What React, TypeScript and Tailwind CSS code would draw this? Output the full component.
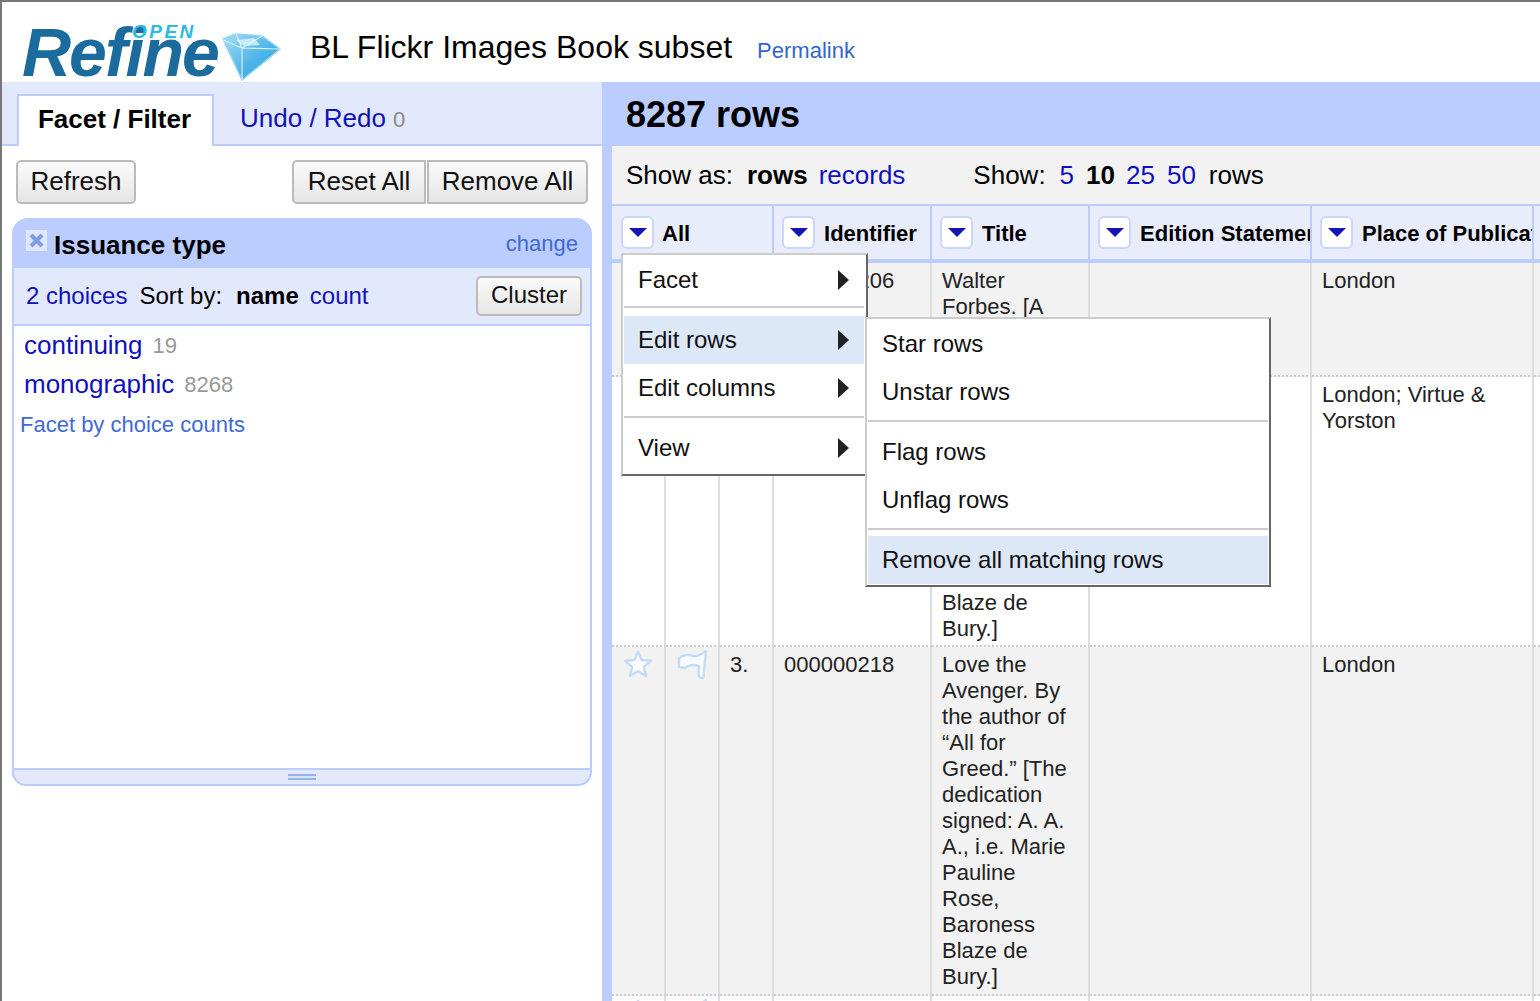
import React from "react";

const LINK = "text-[#1111bb]";
const font = { fontFamily: '"Liberation Sans", Arial, sans-serif' };

function Star() {
  return (
    <svg width="30" height="30" viewBox="0 0 30 30" className="block">
      <path d="M15 2.5 L18.6 11 L27.8 11.8 L20.9 17.9 L23 27 L15 22.2 L7 27 L9.1 17.9 L2.2 11.8 L11.4 11 Z" fill="#f8fbff" stroke="#c4dcf8" strokeWidth="2.4" strokeLinejoin="round" />
    </svg>
  );
}

function FlagIcon() {
  return (
    <svg width="31" height="32" viewBox="0 0 31 32" className="block">
      <path d="M2 9 C6 6 12 5 16 7 C20 8 25 5 29 2 L27.5 17 L26.5 28 C25 30 22 29 21.5 26 L22 17 C17 15 11 16 8 19 L2 18 Z" fill="#f8fbff" stroke="#c4dcf8" strokeWidth="2.4" strokeLinejoin="round" />
    </svg>
  );
}

function Arrow() {
  return <span className="block w-0 h-0 border-y-[10px] border-y-transparent border-l-[11px] border-l-[#222]" />;
}

function ColButton() {
  return (
    <span className="shrink-0 w-[33px] h-[33px] bg-white border-2 border-[#ccd6fb] rounded-[6px] flex items-center justify-center">
      <span className="block w-0 h-0 border-x-[9px] border-x-transparent border-t-[9px] border-t-[#1414b8]" />
    </span>
  );
}

function Btn({ children, className = "" }: { children: React.ReactNode; className?: string }) {
  return (
    <button className={"border-2 border-[#bbb] rounded-[5px] bg-gradient-to-b from-[#fafafa] to-[#e6e6e6] text-[#111] flex items-center justify-center pb-[2px] " + className}>
      {children}
    </button>
  );
}

function MenuItem({ label, arrow, active }: { label: string; arrow?: boolean; active?: boolean }) {
  return (
    <div className={"h-12 pl-[14px] pr-[15px] flex items-center justify-between text-[24px] text-[#111] " + (active ? "bg-[#dce7f7]" : "")}>
      <span>{label}</span>
      {arrow && <Arrow />}
    </div>
  );
}

function Th({ label, colSpan, last, first }: { label: string; colSpan?: number; last?: boolean; first?: boolean }) {
  return (
    <th colSpan={colSpan} className={"p-0 h-[59px] bg-[#e9edfb] border-t-2 border-b-4 border-[#bbccff] font-normal " + (last ? "" : "border-r-2")}>
      <div className={"flex items-center overflow-hidden whitespace-nowrap h-full " + (first ? "pl-[9px] gap-2" : "pl-2 gap-[9px]")}>
        <ColButton />
        <span className="text-[22px] font-bold text-black mt-[2px]">{label}</span>
      </div>
    </th>
  );
}

function Row({ n, id, title, place, h, gray }: { n: string; id: string; title: React.ReactNode; place: React.ReactNode; h: string; gray: boolean }) {
  const td = "align-top border-r-2 border-b-2 border-b-[#ccc] border-r-[#ddd] [border-bottom-style:dotted] ";
  const tx = "pl-[10px] pr-[6px] pt-[5px] text-[22px] leading-[26px] text-[#222] " + td;
  return (
    <tr className={(gray ? "bg-[#f2f2f2] " : "bg-white ") + h}>
      <td className={td + "pl-[11px] pt-[2px]"}><Star /></td>
      <td className={td + "pl-[11px] pt-[2px]"}><FlagIcon /></td>
      <td className={tx}>{n}</td>
      <td className={tx}>{id}</td>
      <td className={tx}>{title}</td>
      <td className={tx}></td>
      <td className={tx}>{place}</td>
      <td className={td}></td>
    </tr>
  );
}

export default function App() {
  return (
    <div style={font} className="relative w-[1540px] h-[1001px] overflow-hidden bg-white border-l-2 border-t-2 border-[#777] flex flex-col">
      <header className="h-[80px] shrink-0 flex items-center relative">
        <div className="relative w-[308px] h-full">
          <span className="absolute left-[20px] top-[11px] text-[68px] leading-[78px] font-bold italic text-[#1b6b9c] tracking-[-2px]">Refine</span>
          <span className="absolute left-[130px] top-[20px] text-[19px] leading-[20px] font-bold italic text-[#2cb9e2] tracking-[2.5px]">OPEN</span>
          <svg width="60" height="48" viewBox="0 0 60 48" className="absolute left-[220px] top-[31px]">
            <defs>
              <linearGradient id="gem" x1="0" y1="0" x2="1" y2="1">
                <stop offset="0" stopColor="#a6e0f5" />
                <stop offset="0.55" stopColor="#4fb4e8" />
                <stop offset="1" stopColor="#2b9cdc" />
              </linearGradient>
            </defs>
            <path d="M1 6 L14 1 L40 3 L58 16 L20 47 Z" fill="url(#gem)" stroke="#8fd4ef" strokeWidth="1.5" strokeLinejoin="round" />
            <path d="M1 7 L20 15 L40 3 M20 15 L58 16 M20 15 L20 47 M14 1 L20 15" fill="none" stroke="#d8f2fb" strokeWidth="1.2" />
            <path d="M14 7 L32 5 L38 12 L22 13 Z" fill="#e4f7fd" opacity="0.75" />
          </svg>
        </div>
        <h1 className="text-[32px] text-black font-normal mt-[10px]">BL Flickr Images Book subset</h1>
        <a className="text-[22px] text-[#3366cc] ml-[25px] mt-[16px]">Permalink</a>
      </header>

      <div className="flex flex-1 min-h-0">
        <aside className="w-[600px] shrink-0 flex flex-col">
          <div className="h-[64px] shrink-0 bg-[#e3e9fd] border-b-2 border-[#bbccff] flex items-end pl-[15px]">
            <div className="w-[197px] h-[52px] mb-[-2px] pb-[4px] pr-[2px] bg-white border-2 border-b-0 border-[#bbccff] flex items-center justify-center text-[26px] font-bold text-black">Facet / Filter</div>
            <div className="h-[50px] ml-[26px] flex items-center gap-[7px] mb-[1px]">
              <span className={"text-[26px] " + LINK}>Undo / Redo</span>
              <span className="text-[22px] text-[#888] mt-[3px]">0</span>
            </div>
          </div>
          <div className="flex justify-between px-[14px] pt-[14px] text-[26px]">
            <Btn className="w-[120px] h-[44px]">Refresh</Btn>
            <div className="flex gap-px">
              <Btn className="w-[134px] h-[44px] rounded-r-none">Reset All</Btn>
              <Btn className="w-[161px] h-[44px] rounded-l-none">Remove All</Btn>
            </div>
          </div>
          <section className="mx-[10px] mt-[14px] h-[568px] flex flex-col">
            <div className="h-[50px] shrink-0 bg-[#bbccff] rounded-t-[16px] flex items-center justify-between pl-[14px] pr-[14px]">
              <div className="flex items-center gap-[7px]">
                <span className="w-[21px] h-[21px] mt-[-5px] bg-[#dfe7ff] flex items-center justify-center">
                  <svg width="15" height="15" viewBox="0 0 15 15"><path d="M2 2 L13 13 M13 2 L2 13" stroke="#7d9ce8" strokeWidth="4" /></svg>
                </span>
                <span className="text-[26px] font-bold text-black mt-[4px]">Issuance type</span>
              </div>
              <a className="text-[22px] text-[#4169d4]">change</a>
            </div>
            <div className="h-[58px] shrink-0 bg-[#e3e9fd] border-x-2 border-b-2 border-[#bbccff] flex items-center pl-3 pr-2 text-[24px] text-black">
              <a className={LINK}>2 choices</a>
              <span className="ml-3">Sort by:</span>
              <b className="ml-[14px]">name</b>
              <a className={"ml-[11px] " + LINK}>count</a>
              <Btn className="ml-auto w-[106px] h-[40px]">Cluster</Btn>
            </div>
            <div className="flex-1 bg-white border-x-2 border-[#bbccff]">
              <div className="pl-[10px] h-[39px] flex items-center gap-[10px]">
                <a className={"text-[26px] " + LINK}>continuing</a>
                <span className="text-[22px] text-[#999]">19</span>
              </div>
              <div className="pl-[10px] h-[39px] flex items-center gap-[10px]">
                <a className={"text-[26px] " + LINK}>monographic</a>
                <span className="text-[22px] text-[#999]">8268</span>
              </div>
              <div className="pl-[6px] mt-[8px] text-[22px] leading-[26px] text-[#3f6ad8]">Facet by choice counts</div>
            </div>
            <div className="h-[18px] shrink-0 bg-[#e3e9fd] border-2 border-[#bbccff] rounded-b-[14px] flex items-center justify-center">
              <div className="w-[28px] h-[6px] border-y-2 border-[#98b2ea] bg-[#dbe3fa]" />
            </div>
          </section>
        </aside>

        <main className="flex-1 min-w-0 flex flex-col border-l-[10px] border-[#bbccff] overflow-hidden relative">
          <div className="h-[64px] shrink-0 bg-[#bbccff] ml-[-10px] pl-6 pt-[2px] flex items-center">
            <h2 className="text-[36px] font-bold text-black">8287 rows</h2>
          </div>
          <div className="h-[58px] shrink-0 bg-[#f2f2f2] pl-[14px] flex items-center text-[26px] text-black whitespace-nowrap">
            <span>Show as:</span>
            <b className="ml-[14px]">rows</b>
            <a className={"ml-[11px] " + LINK}>records</a>
            <span className="ml-[68px]">Show:</span>
            <a className={"ml-[14px] " + LINK}>5</a>
            <b className="ml-3">10</b>
            <a className={"ml-[11px] " + LINK}>25</a>
            <a className={"ml-3 " + LINK}>50</a>
            <span className="ml-[13px]">rows</span>
          </div>
          <table className="table-fixed border-separate border-spacing-0 w-[1000px]">
            <colgroup>
              <col className="w-[54px]" />
              <col className="w-[54px]" />
              <col className="w-[54px]" />
              <col className="w-[158px]" />
              <col className="w-[158px]" />
              <col className="w-[222px]" />
              <col className="w-[222px]" />
              <col className="w-[78px]" />
            </colgroup>
            <thead>
              <tr>
                <Th label="All" colSpan={3} first />
                <Th label="Identifier" />
                <Th label="Title" />
                <Th label="Edition Statement" />
                <Th label="Place of Publication" />
                <Th label="" last />
              </tr>
            </thead>
            <tbody>
              <Row gray h="h-[114px]" n="1." id="000000206" place="London" title={<>Walter<br />Forbes. [A<br />novel.] By<br />A. A.</>} />
              <Row gray={false} h="h-[270px]" n="2." id="000000216" place={<>London; Virtue &amp;<br />Yorston</>} title={<>All for<br />Greed. [The<br />dedication<br />signed: A. A.<br />A., i.e. Marie<br />Pauline<br />Rose,<br />Baroness<br />Blaze de<br />Bury.]</>} />
              <Row gray h="h-[349px]" n="3." id="000000218" place="London" title={<>Love the<br />Avenger. By<br />the author of<br />“All for<br />Greed.” [The<br />dedication<br />signed: A. A.<br />A., i.e. Marie<br />Pauline<br />Rose,<br />Baroness<br />Blaze de<br />Bury.]</>} />
              <Row gray={false} h="h-[60px]" n="4." id="000000220" place="London" title="Walter" />
            </tbody>
          </table>

          <div className="absolute left-[9px] top-[171px] w-[247px] h-[223px] bg-white border-2 border-t-[#ccc] border-l-[#ccc] border-r-[#666] border-b-[#666] z-10 pl-px pr-[2px] pt-px">
            <MenuItem label="Facet" arrow />
            <div className="h-[2px] bg-[#ccc] mt-[2px] mb-2" />
            <MenuItem label="Edit rows" arrow active />
            <MenuItem label="Edit columns" arrow />
            <div className="h-[2px] bg-[#ccc] mt-1 mb-[6px]" />
            <MenuItem label="View" arrow />
          </div>
          <div className="absolute left-[253px] top-[235px] w-[406px] h-[270px] bg-white border-2 border-t-[#ccc] border-l-[#ccc] border-r-[#666] border-b-[#666] z-20 px-px pt-px">
            <MenuItem label="Star rows" />
            <MenuItem label="Unstar rows" />
            <div className="h-[2px] bg-[#ccc] mt-1 mb-[6px]" />
            <MenuItem label="Flag rows" />
            <MenuItem label="Unflag rows" />
            <div className="h-[2px] bg-[#ccc] mt-1 mb-[6px]" />
            <MenuItem label="Remove all matching rows" active />
          </div>
        </main>
      </div>
    </div>
  );
}
